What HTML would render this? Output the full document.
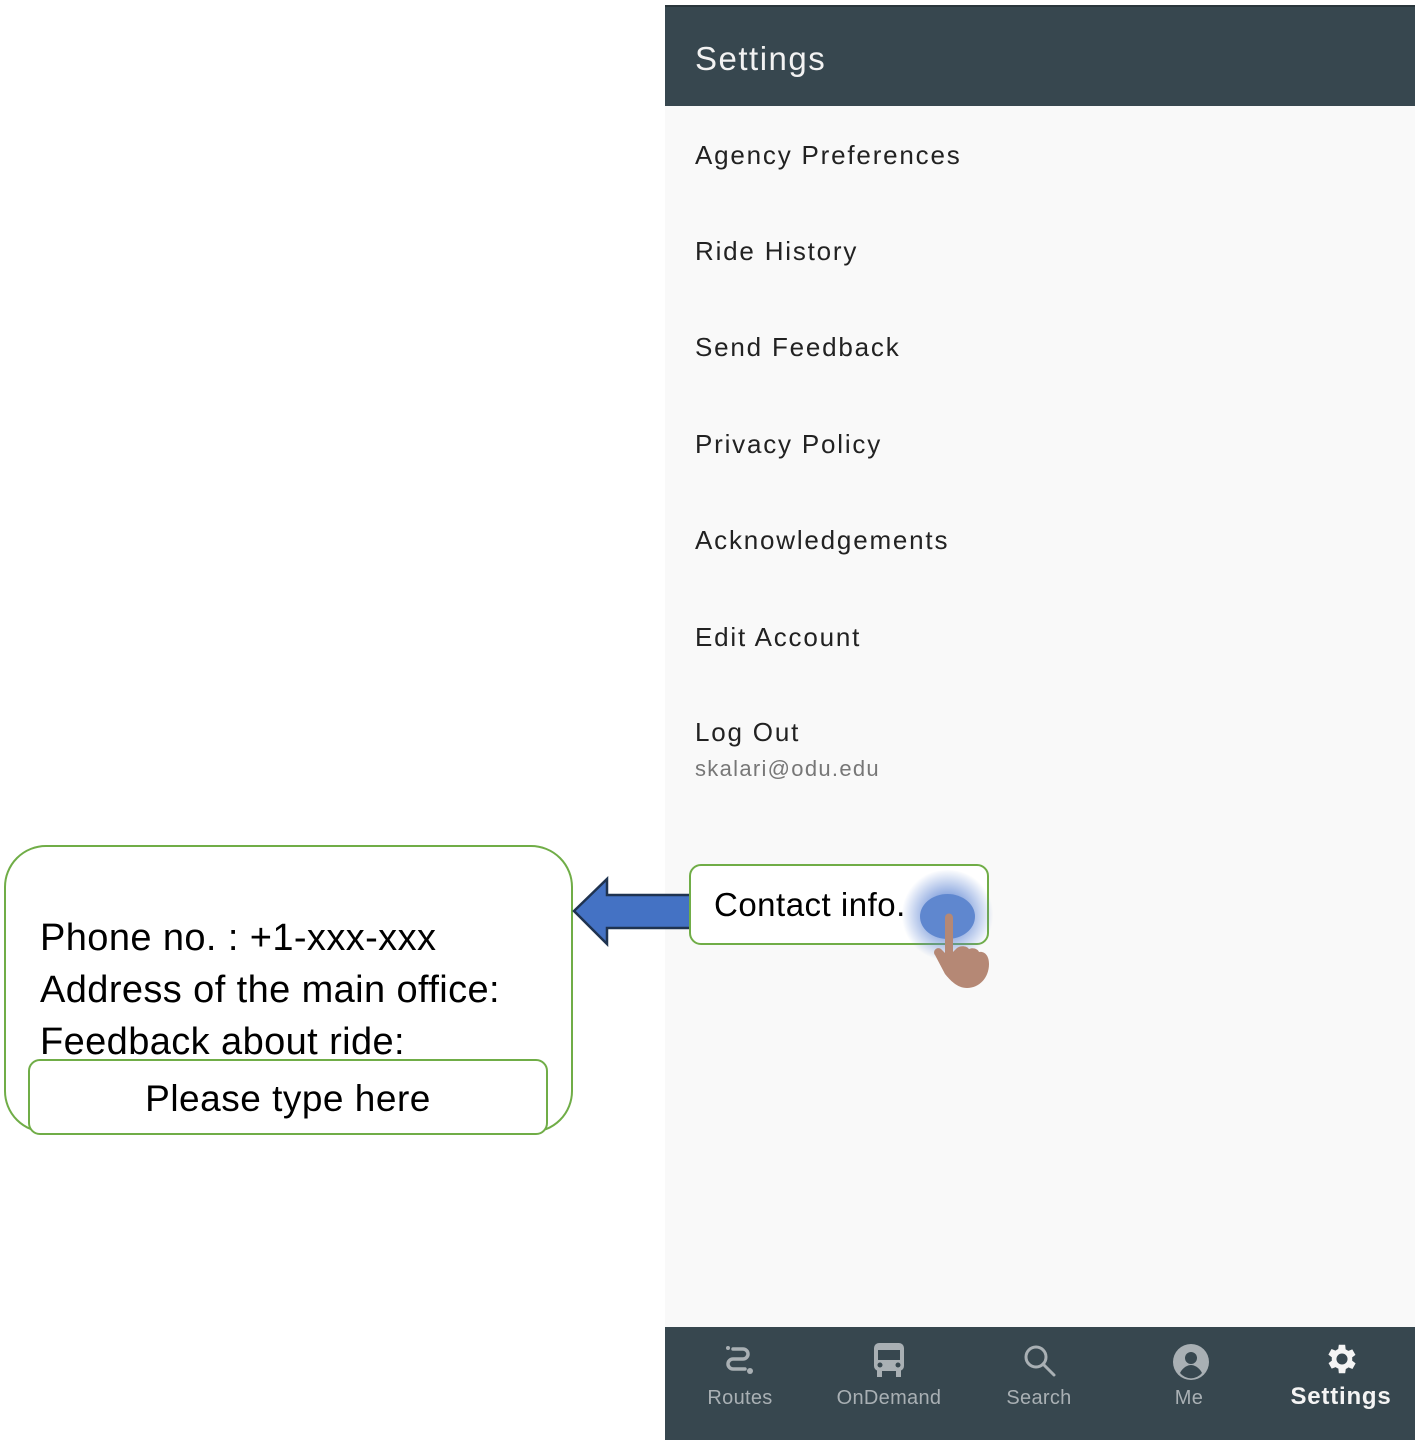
<!DOCTYPE html>
<html><head><style>
body{margin:0;width:1415px;height:1440px;position:relative;background:#fff;font-family:"Liberation Sans",sans-serif;overflow:hidden}
.panel{position:absolute;left:665px;top:5px;width:750px;height:1435px;background:#f9f9f9}
.hdr{position:absolute;left:665px;top:5px;width:750px;height:101px;background:#37474f;border-top:2px solid #2a363c;box-sizing:border-box}
.hdr span{position:absolute;left:30px;top:33px;color:#f2f2f2;font-size:33px;letter-spacing:1.5px}
.item{position:absolute;left:695px;font-size:26px;color:#222;line-height:30px;letter-spacing:1.8px}
.nav{position:absolute;left:665px;top:1327px;width:750px;height:113px;background:#37474f}
.nv{position:absolute;top:60px;font-size:20px;color:#a9b0b4;text-align:center;width:150px;letter-spacing:.3px}
.big{position:absolute;font-family:"Liberation Sans",sans-serif;font-size:38px;color:#000;left:40px;letter-spacing:.4px}
</style></head><body>
<div class="panel"></div>
<div class="hdr"><span>Settings</span></div>
<div class="item" style="top:140px">Agency Preferences</div>
<div class="item" style="top:236px">Ride History</div>
<div class="item" style="top:332px">Send Feedback</div>
<div class="item" style="top:429px">Privacy Policy</div>
<div class="item" style="top:525px">Acknowledgements</div>
<div class="item" style="top:622px">Edit Account</div>
<div class="item" style="top:717px">Log Out</div>
<div class="item" style="top:754px;font-size:22px;color:#777;letter-spacing:1.3px">skalari@odu.edu</div>

<div class="nav">
<svg style="position:absolute;left:58px;top:17px" width="32" height="34" viewBox="0 0 32 34" fill="none" stroke="#a9b0b4" stroke-width="3.5" stroke-linecap="round"><circle cx="5" cy="4" r="2" fill="#a9b0b4" stroke="none"/><path d="M10 5h10a5 5 0 0 1 0 10H10a5 5 0 0 0 0 10h12"/><circle cx="27" cy="27" r="3" fill="#a9b0b4" stroke="none"/></svg>
<svg style="position:absolute;left:208px;top:15px" width="32" height="36" viewBox="0 0 32 36"><rect x="1" y="1" width="30" height="28" rx="5" fill="#a9b0b4"/><rect x="5" y="8" width="22" height="10" fill="#37474f"/><circle cx="7" cy="23" r="2.5" fill="#37474f"/><circle cx="25" cy="23" r="2.5" fill="#37474f"/><rect x="4" y="28" width="5" height="7" fill="#a9b0b4"/><rect x="23" y="28" width="5" height="7" fill="#a9b0b4"/></svg>
<svg style="position:absolute;left:358px;top:17px" width="34" height="34" viewBox="0 0 34 34" fill="none" stroke="#a9b0b4" stroke-width="3"><circle cx="13" cy="13" r="10"/><path d="M20 20l11 11" stroke-linecap="round"/></svg>
<svg style="position:absolute;left:507px;top:16px" width="38" height="38" viewBox="0 0 38 38"><circle cx="19" cy="19" r="18" fill="#a9b0b4"/><circle cx="19" cy="15" r="6" fill="#37474f"/><path d="M8 30c3-6 8-8 11-8s8 2 11 8a14 14 0 0 1-22 0z" fill="#37474f"/></svg>
<svg style="position:absolute;left:658px;top:13px" width="38" height="38" viewBox="0 0 24 24"><path fill="#f4f4f4" d="M19.4 13a7.8 7.8 0 0 0 0-2l2.1-1.6-2-3.5-2.5 1a7.6 7.6 0 0 0-1.7-1L15 3h-4l-.4 2.7a7.6 7.6 0 0 0-1.7 1l-2.5-1-2 3.5L6.6 11a7.8 7.8 0 0 0 0 2l-2.1 1.6 2 3.5 2.5-1a7.6 7.6 0 0 0 1.7 1L11 21h4l.4-2.7a7.6 7.6 0 0 0 1.7-1l2.5 1 2-3.5zM13 15.5a3.5 3.5 0 1 1 0-7 3.5 3.5 0 0 1 0 7z" transform="translate(-1 0)"/></svg>
<div class="nv" style="left:0">Routes</div>
<div class="nv" style="left:149px">OnDemand</div>
<div class="nv" style="left:299px">Search</div>
<div class="nv" style="left:449px">Me</div>
<div class="nv" style="left:601px;color:#f4f4f4;font-weight:bold;font-size:24px;top:56px;letter-spacing:.8px">Settings</div>
</div>

<div style="position:absolute;left:4px;top:845px;width:569px;height:288px;border:2px solid #70ad47;border-radius:42px;box-sizing:border-box;background:#fff"></div>
<div class="big" style="top:917px">Phone no. : +1-xxx-xxx</div>
<div class="big" style="top:969px">Address of the main office:</div>
<div class="big" style="top:1021px">Feedback about ride:</div>
<div style="position:absolute;left:28px;top:1059px;width:520px;height:76px;border:2px solid #70ad47;border-radius:12px;box-sizing:border-box;background:#fff;text-align:center;font-size:37px;letter-spacing:.5px;line-height:76px">Please type here</div>

<svg style="position:absolute;left:570px;top:875px" width="125" height="75" viewBox="570 875 125 75"><path d="M574 911L607 879V895H692V928H607V944Z" fill="#4472c4" stroke="#1f3350" stroke-width="2.5"/></svg>
<div style="position:absolute;left:689px;top:864px;width:300px;height:81px;border:2px solid #70ad47;border-radius:12px;box-sizing:border-box;background:#fff"></div>
<div style="position:absolute;left:714px;top:886px;font-size:33px;letter-spacing:.5px">Contact info.</div>
<div style="position:absolute;left:900px;top:870px;width:95px;height:90px;border-radius:50%;background:radial-gradient(circle,rgba(90,130,210,.7) 30%,rgba(90,130,210,0) 70%)"></div>
<div style="position:absolute;left:920px;top:894px;width:55px;height:45px;border-radius:50%;background:#5f87cf"></div>
<svg style="position:absolute;left:925px;top:910px" width="75" height="80" viewBox="0 0 75 80"><path d="M20 8c0-6 8-6 8 0v34l4-4c4-3 10-2 12 1 4-2 9 0 10 3 6-1 10 4 10 12 0 14-10 24-22 24-10 0-17-8-22-14L10 45c-3-4 2-9 6-6l4 4z" fill="#b58875"/></svg>
</body></html>
